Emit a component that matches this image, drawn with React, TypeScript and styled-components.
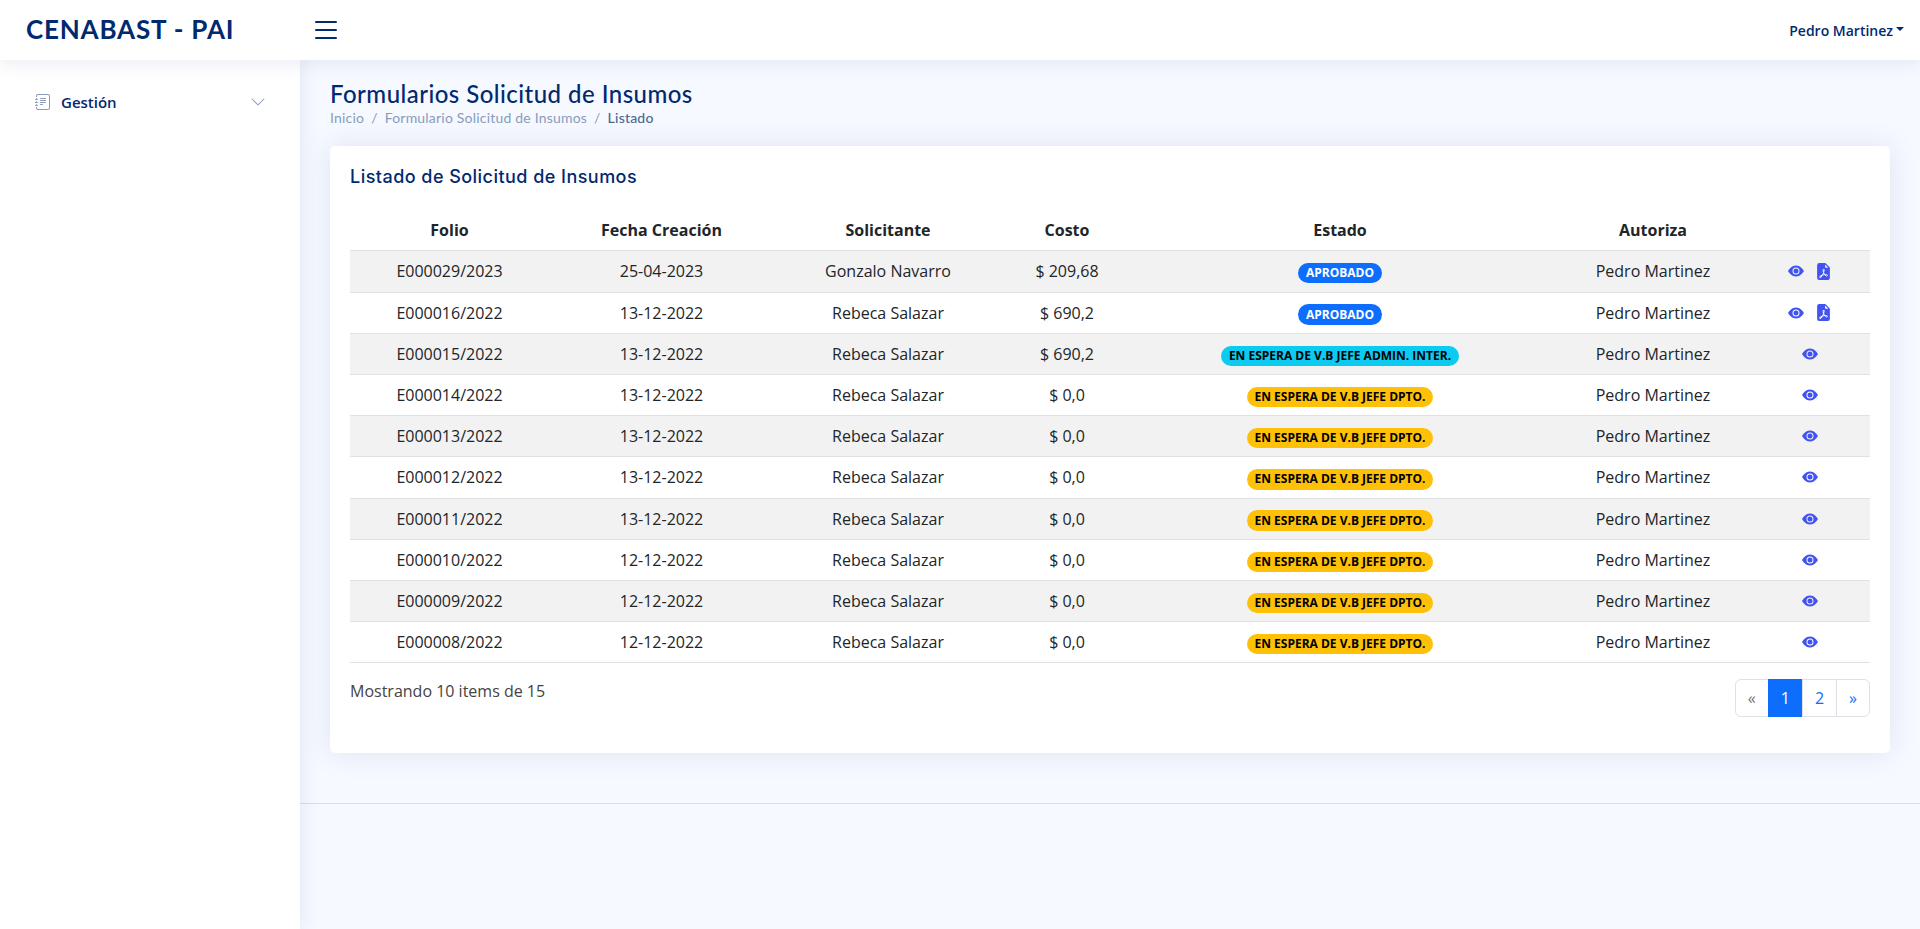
import React from "react";
import styled, { createGlobalStyle } from "styled-components";
import { BsList, BsJournalText, BsChevronDown, BsEyeFill, BsFileEarmarkPdfFill } from "react-icons/bs";

const Global = createGlobalStyle`
  * { box-sizing: border-box; }
  html, body { margin: 0; padding: 0; }
  body { font-family: "Open Sans", sans-serif; background: #f6f9ff; color: #444; font-size: 16px; line-height: 1.5; }
`;

const Header = styled.header`
  position: relative; z-index: 3;
  height: 60px; background: #fff;
  display: flex; align-items: center;
  padding: 0 16px 0 26px;
  box-shadow: 0 2px 20px rgba(1, 41, 112, 0.1);
`;
const Logo = styled.span`
  width: 284px; padding-bottom: 2px;
  font-family: "Lato", sans-serif; font-size: 26px; font-weight: 700; letter-spacing: 0.8px; color: #012970; line-height: 1;
`;
const Toggle = styled.span`
  display: flex; color: #012970; font-size: 32px;
`;
const User = styled.a`
  margin-left: auto; display: flex; align-items: center; gap: 3px;
  font-size: 14px; font-weight: 550; color: #012970;
  &::after {
    content: ""; width: 0; height: 0;
    border-top: 4px solid #012970; border-left: 4px solid transparent; border-right: 4px solid transparent;
    margin-bottom: 2px;
  }
`;
const Layout = styled.div`
  display: flex; min-height: 869px;
`;
const Sidebar = styled.aside`
  position: relative; z-index: 2;
  flex: 0 0 300px; background: #fff; padding: 21px 20px 20px;
  box-shadow: 0 0 20px rgba(1, 41, 112, 0.1);
`;
const NavLink = styled.a`
  display: flex; align-items: center;
  padding: 10px 15px;
  font-size: 15px; font-weight: 600; color: #012970;
  svg:first-child { font-size: 16px; margin-right: 10px; color: #899bbd; }
  svg:last-child { font-size: 16px; margin-left: auto; margin-right: -1px; color: #899bbd; }
`;
const Content = styled.div`
  flex: 1; min-width: 0;
`;
const Main = styled.main`
  padding: 19px 30px 20px;
`;
const PageTitle = styled.div`
  margin-bottom: 18px;
`;
const H1 = styled.h1`
  margin: 0; font-family: "Lato", sans-serif; font-size: 24px; font-weight: 500; letter-spacing: 0.46px; line-height: 29px; color: #012970;
`;
const Crumbs = styled.ol`
  margin: 0; padding: 0; list-style: none; display: flex;
  font-family: "Lato", sans-serif; font-size: 14px; letter-spacing: 0.2px; line-height: 20px; color: #899bbd;
`;
const Crumb = styled.li<{ $active?: boolean }>`
  color: ${(p) => (p.$active ? "#51678f" : "#899bbd")};
  font-weight: ${(p) => (p.$active ? 500 : 400)};
  &:not(:first-child)::before { content: "/"; color: #899bbd; padding: 0 7px; font-weight: 400; }
`;
const Card = styled.section`
  background: #fff; border-radius: 5px; padding: 0 20px 20px;
  margin-bottom: 30px;
  box-shadow: 0 0 30px rgba(1, 41, 112, 0.1);
`;
const CardTitle = styled.h5`
  margin: 0; padding: 20px 0 15px;
  font-family: "Inter", sans-serif; font-size: 18px; font-weight: 450; letter-spacing: 0.46px; line-height: 21.6px; color: #012970;
`;
const Table = styled.table`
  width: 100%; border-collapse: collapse; table-layout: fixed; color: #212529; margin-bottom: 16px;
`;
const Th = styled.th`
  padding: 8px; text-align: center; vertical-align: bottom; font-weight: 700; border-bottom: 1px solid #dee2e6; height: 47.5px;
`;
const Td = styled.td`
  padding: 8px; text-align: center; border-bottom: 1px solid #dee2e6; height: 41.11px;
`;
const Row = styled.tr<{ $odd: boolean }>`
  background: ${(p) => (p.$odd ? "#f2f2f2" : "transparent")};
  &:first-child td { height: 42px; }
`;
const Badge = styled.span<{ $bg: string; $fg: string }>`
  display: inline-block; padding: 4.2px 7.8px; border-radius: 50rem;
  font-size: 12px; font-weight: 700; line-height: 1; white-space: nowrap;
  background: ${(p) => p.$bg}; color: ${(p) => p.$fg};
`;
const Actions = styled.span`
  display: flex; justify-content: center; align-items: center; gap: 11px;
  color: #4154f1; font-size: 16px; padding-right: 8px;
`;
const PdfIcon = styled(BsFileEarmarkPdfFill)`
  font-size: 17px;
`;
const Footer = styled.div`
  display: flex; justify-content: space-between; align-items: flex-start; min-height: 54px;
`;
const Count = styled.span`
  color: #444;
`;
const Pager = styled.ul`
  display: flex; margin: 0; padding: 0; list-style: none;
`;
const Page = styled.li<{ $active?: boolean; $muted?: boolean }>`
  padding: 6px 12px; margin-left: -1px; height: 38px;
  border: 1px solid ${(p) => (p.$active ? "#0d6efd" : "#dee2e6")};
  background: ${(p) => (p.$active ? "#0d6efd" : "#fff")};
  color: ${(p) => (p.$active ? "#fff" : p.$muted ? "#6c757d" : "#0d6efd")};
  &:first-child { border-radius: 6px 0 0 6px; margin-left: 0; }
  &:last-child { border-radius: 0 6px 6px 0; }
`;
const Bottom = styled.footer`
  border-top: 1px solid #cddfff; height: 125px;
`;

const widths = [199, 225, 228, 130, 416, 210, 112];
const blue = ["#0d6efd", "#fff"];
const cyan = ["#0dcaf0", "#000"];
const amber = ["#ffc107", "#000"];
const DPTO = "EN ESPERA DE V.B JEFE DPTO.";
const rows: [string, string, string, string, string, string[], boolean][] = [
  ["E000029/2023", "25-04-2023", "Gonzalo Navarro", "$ 209,68", "APROBADO", blue, true],
  ["E000016/2022", "13-12-2022", "Rebeca Salazar", "$ 690,2", "APROBADO", blue, true],
  ["E000015/2022", "13-12-2022", "Rebeca Salazar", "$ 690,2", "EN ESPERA DE V.B JEFE ADMIN. INTER.", cyan, false],
  ["E000014/2022", "13-12-2022", "Rebeca Salazar", "$ 0,0", DPTO, amber, false],
  ["E000013/2022", "13-12-2022", "Rebeca Salazar", "$ 0,0", DPTO, amber, false],
  ["E000012/2022", "13-12-2022", "Rebeca Salazar", "$ 0,0", DPTO, amber, false],
  ["E000011/2022", "13-12-2022", "Rebeca Salazar", "$ 0,0", DPTO, amber, false],
  ["E000010/2022", "12-12-2022", "Rebeca Salazar", "$ 0,0", DPTO, amber, false],
  ["E000009/2022", "12-12-2022", "Rebeca Salazar", "$ 0,0", DPTO, amber, false],
  ["E000008/2022", "12-12-2022", "Rebeca Salazar", "$ 0,0", DPTO, amber, false],
];

export default function App() {
  return (
    <>
      <Global />
      <Header>
        <Logo>CENABAST - PAI</Logo>
        <Toggle><BsList /></Toggle>
        <User>Pedro Martinez</User>
      </Header>
      <Layout>
        <Sidebar>
          <NavLink><BsJournalText /><span>Gestión</span><BsChevronDown /></NavLink>
        </Sidebar>
        <Content>
          <Main>
            <PageTitle>
              <H1>Formularios Solicitud de Insumos</H1>
              <Crumbs>
                <Crumb>Inicio</Crumb>
                <Crumb>Formulario Solicitud de Insumos</Crumb>
                <Crumb $active>Listado</Crumb>
              </Crumbs>
            </PageTitle>
            <Card>
              <CardTitle>Listado de Solicitud de Insumos</CardTitle>
              <Table>
                <colgroup>{widths.map((w, i) => <col key={i} width={w} />)}</colgroup>
                <thead>
                  <tr>
                    {["Folio", "Fecha Creación", "Solicitante", "Costo", "Estado", "Autoriza", ""].map((h, i) => <Th key={i}>{h}</Th>)}
                  </tr>
                </thead>
                <tbody>
                  {rows.map((r, i) => (
                    <Row key={r[0]} $odd={i % 2 === 0}>
                      <Td>{r[0]}</Td>
                      <Td>{r[1]}</Td>
                      <Td>{r[2]}</Td>
                      <Td>{r[3]}</Td>
                      <Td><Badge $bg={r[5][0]} $fg={r[5][1]}>{r[4]}</Badge></Td>
                      <Td>Pedro Martinez</Td>
                      <Td>
                        <Actions>
                          <BsEyeFill />
                          {r[6] && <PdfIcon />}
                        </Actions>
                      </Td>
                    </Row>
                  ))}
                </tbody>
              </Table>
              <Footer>
                <Count>Mostrando 10 items de 15</Count>
                <Pager>
                  <Page $muted>«</Page>
                  <Page $active>1</Page>
                  <Page>2</Page>
                  <Page>»</Page>
                </Pager>
              </Footer>
            </Card>
          </Main>
          <Bottom />
        </Content>
      </Layout>
    </>
  );
}
